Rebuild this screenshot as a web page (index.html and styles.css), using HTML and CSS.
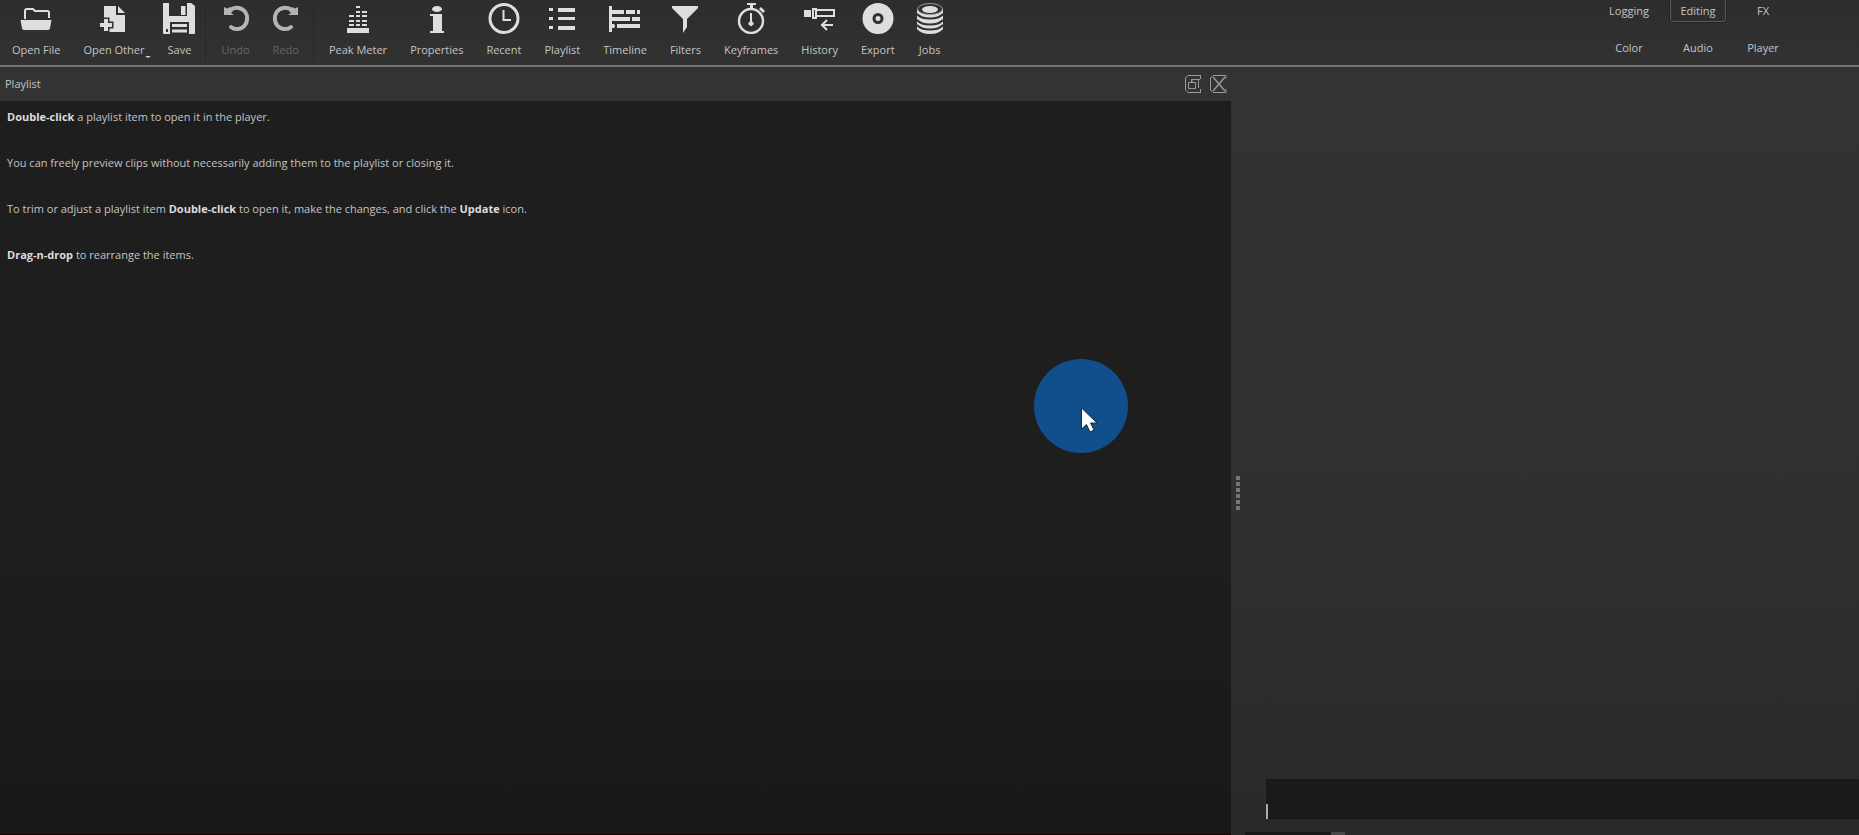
FILE: index.html
```
<!DOCTYPE html>
<html lang="en">
<head>
<meta charset="utf-8">
<title>Video Editor</title>
<link rel="stylesheet" href="styles.css">
</head>
<body>
<div class="app">
  <header class="topbar">
    <div class="toolbar" role="toolbar" aria-label="Main">
      <button class="tool"><svg class="icon" viewBox="0 0 32 32"><path d="M5 17V9q0-2 2-2h6l2 2h12.500q1.500 0 1.500 1.500V16" fill="none" stroke="currentColor" stroke-width="2"/><path d="M.5 18h31l-1.500 8q-.3 2-2 2H4q-1.700 0-2-2z" fill="currentColor"/></svg>Open File</button>
      <button class="tool"><svg class="icon" viewBox="0 0 32 32"><path d="M6 4h12v9h9v17H6z" fill="currentColor"/><path d="M20 4l7 7h-7z" fill="currentColor"/><path d="M6 17h4v4h4v4h-4v4H6v-4H2v-4h4z" fill="currentColor" stroke="#303030" stroke-width="3" paint-order="stroke"/></svg>Open Other<i class="more"></i></button>
      <button class="tool"><svg class="icon" viewBox="0 0 32 32"><path d="M0 1h6v13h18V1h4l4 3v27q0 1-1 1H1q-1 0-1-1z" fill="currentColor"/><path d="M18 4h4.500v9H18z" fill="currentColor"/><path d="M7 20h19v12H7zM3 27h2v3H3z" fill="#303030"/><path d="M9 23.500h15M9 29h15" stroke="currentColor" stroke-width="3"/></svg>Save</button>
      <span class="separator"></span>
      <button class="tool" disabled><svg class="icon" viewBox="0 0 32 32"><path d="M10 8q4-3 9-2c12 3 10 20-1 21q-4 .5-7-2" fill="none" stroke="currentColor" stroke-width="4" stroke-linecap="round"/><path d="M4 5l3 1.500L10 5l3 4-2 2 3 2H4z" fill="currentColor"/></svg>Undo</button>
      <button class="tool" disabled><svg class="icon" viewBox="0 0 32 32"><path d="M22 8q-4-3-9-2c-12 3-10 20 1 21q4 .5 7-2" fill="none" stroke="currentColor" stroke-width="4" stroke-linecap="round"/><path d="M28 5l-3 1.500L22 5l-3 4 2 2-3 2h10z" fill="currentColor"/></svg>Redo</button>
      <span class="separator"></span>
      <button class="tool"><svg class="icon" viewBox="0 0 32 32"><path d="M5 26h22v5H5zM7 22h5v2H7zM14 22h4v2h-4zM20 22h5v2h-5zM7 18h5v2H7zM14 18h4v2h-4zM20 18h5v2h-5zM7 13h5v2H7zM14 13h4v2h-4zM20 13h5v2h-5zM14 9h4v2h-4zM20 9h5v2h-5zM14 4h4v2h-4z" fill="currentColor"/></svg>Peak Meter</button>
      <button class="tool"><svg class="icon" viewBox="0 0 32 32"><g fill="currentColor"><ellipse cx="16" cy="7" rx="5" ry="3"/><path d="M9 12h12v17h2v2H9v-2h3V14H9z"/></g></svg>Properties</button>
      <button class="tool"><svg class="icon" viewBox="0 0 32 32"><circle cx="16" cy="16.500" r="14" fill="none" stroke="currentColor" stroke-width="3"/><path d="M15.500 8v10H23" fill="none" stroke="currentColor" stroke-width="2"/></svg>Recent</button>
      <button class="tool"><svg class="icon" viewBox="0 0 32 32"><path d="M3 6h4v3H3zM12 6h17v4H12zM3 15h4v3H3zM12 15h17v3H12zM3 24h4v3H3zM12 24h17v4H12z" fill="currentColor"/></svg>Playlist</button>
      <button class="tool"><svg class="icon" viewBox="0 0 32 32"><path d="M0 4h3v4h12v4H3v3h18v4H3v3h2q2 2 0 4H3v4H0zM17 8h9v4h-9zM28 8h3v4h-3zM23 15h8v4h-8zM8 22h23v4H8z" fill="currentColor"/></svg>Timeline</button>
      <button class="tool"><svg class="icon" viewBox="0 0 32 32"><path d="M3 4h26v2L18 17v8l-4 6V17L3 6z" fill="currentColor"/></svg>Filters</button>
      <button class="tool"><svg class="icon" viewBox="0 0 32 32"><circle cx="16" cy="19" r="12" fill="none" stroke="currentColor" stroke-width="2.500"/><path d="M12 1h9v2h-3v4h-3V3h-3zM24 7l2-2 4 4-2 2z" fill="currentColor"/><path d="M15 11h2v8l2 3-3 2.500-3-2.500 2-3z" fill="currentColor"/></svg>Keyframes</button>
      <button class="tool"><svg class="icon" viewBox="0 0 32 32"><path d="M0 8h7v7H0zM8 6h5v11H8z" fill="currentColor"/><path d="M10 8h1v7h-1z" fill="#303030"/><path d="M13 8h17v6H13M29 23H17M23 18l-5 5 5 5" fill="none" stroke="currentColor" stroke-width="2"/></svg>History</button>
      <button class="tool"><svg class="icon" viewBox="0 0 32 32"><circle cx="16" cy="16.500" r="15.500" fill="currentColor"/><circle cx="16" cy="16.500" r="4" fill="none" stroke="#303030" stroke-width="3"/></svg>Export</button>
      <button class="tool"><svg class="icon" viewBox="0 0 32 32"><path d="M3 7v20q4 5 13 5t13-5V7z" fill="currentColor"/><ellipse cx="16" cy="7" rx="12.500" ry="5.500" fill="#303030" stroke="#999" stroke-width="1"/><ellipse cx="16" cy="7.500" rx="8" ry="3.500" fill="currentColor"/><path d="M3 12q4 4.500 13 4.500T29 12M3 18q4 4.500 13 4.500T29 18M3 23q4 4.500 13 4.500T29 23" fill="none" stroke="#303030" stroke-width="2"/></svg>Jobs</button>
    </div>
    <nav class="layouts" aria-label="Layouts">
      <button class="layout">Logging</button>
      <button class="layout current" aria-pressed="true">Editing</button>
      <button class="layout">FX</button>
      <button class="layout">Color</button>
      <button class="layout">Audio</button>
      <button class="layout">Player</button>
    </nav>
  </header>
  <main class="workspace">
    <section class="dock">
      <div class="dock-title">
        <h1>Playlist</h1>
        <button class="dock-button" aria-label="Float"><svg viewBox="0 0 18 20"><path d="M4 1.500h13M4 1.500L1.500 4v12L4 18.500h13M16.500 1v4M16.500 15v4M16 5.500H8v3M14.500 6v8M4.500 8.500h7v6h-7zM7.500 8V5" fill="none" stroke="currentColor"/></svg></button>
        <button class="dock-button" aria-label="Close"><svg viewBox="0 0 18 20"><path d="M4 1.500h13v3M4 1.500L1.500 4v12L4 18.500h13V15" fill="none" stroke="currentColor"/><path d="M4 3l12 14M16 3L4 17" fill="none" stroke="currentColor" stroke-width="1.500"/></svg></button>
      </div>
      <div class="playlist">
        <p><b>Double-click</b> a playlist item to open it in the player.</p>
        <p>You can freely preview clips without necessarily adding them to the playlist or closing it.</p>
        <p>To trim or adjust a playlist item <b>Double-click</b> to open it, make the changes, and click the <b>Update</b> icon.</p>
        <p><b>Drag-n-drop</b> to rearrange the items.</p>
        <div class="pointer"><svg viewBox="0 0 18 26"><path d="M1.500 1v21l5-4.500L10 25l4-2-3.500-7H17z" fill="#fff" stroke="#1c2c40"/></svg></div>
      </div>
    </section>
    <div class="splitter"><i></i><i></i><i></i><i></i><i></i><i></i></div>
    <section class="player">
      <div class="scrub"><span class="playhead"></span></div>
      <div class="tabs"></div>
    </section>
  </main>
</div>
</body>
</html>
```
FILE: styles.css
```
* {
  box-sizing: border-box;
}

body {
  margin: 0;
  background: #303030;
  color: #c4c4c4;
  font: 11px/16px "Open Sans", "Noto Sans", sans-serif;
}

button {
  margin: 0;
  padding: 0;
  border: 0;
  background: none;
  color: inherit;
  font: inherit;
}

.app {
  display: flex;
  flex-direction: column;
  height: 100vh;
  overflow: hidden;
}

.topbar {
  display: flex;
  justify-content: space-between;
  border-bottom: 2px solid #757575;
  background: linear-gradient(#2d2d2d, #323232);
}

.toolbar {
  display: flex;
  height: 65px;
}

.tool {
  position: relative;
  display: flex;
  flex-direction: column;
  align-items: center;
  gap: 8px;
  padding: 2px 11px 0 12px;
}

.icon {
  width: 32px;
  height: 32px;
  margin: 0 -4px;
  color: #dedede;
}

.tool:disabled {
  color: #666;
}

.tool:disabled .icon {
  color: #b4b4b4;
}

.more {
  position: absolute;
  right: 4px;
  top: 56px;
  border: 3px solid transparent;
  border-top: 2px solid #ccc;
  border-bottom: 0;
}

.separator {
  width: 1px;
  margin: 4px 3px;
  background: #282828;
}

.layouts {
  display: grid;
  grid-template-columns: 60px 60px 52px;
  gap: 15px 9px;
  justify-items: center;
  align-content: start;
  margin-right: 70px;
}

.layout {
  height: 22px;
  padding: 0 9px;
}

.layout.current {
  border: 1px solid #5a5a5a;
  border-top: 0;
  border-radius: 0 0 3px 3px;
  outline: 1px solid #222;
}

.workspace {
  display: flex;
  flex: 1;
  min-height: 0;
  background: linear-gradient(#333 0%, #303030 60%, #292929 100%);
}

.dock {
  display: flex;
  flex: 0 0 66.22%;
  flex-direction: column;
}

.dock-title {
  display: flex;
  align-items: center;
  gap: 7px;
  height: 34px;
  padding: 0 4px 0 5px;
}

.dock-title h1 {
  flex: 1;
  margin: 0;
  font: inherit;
}

.dock-button {
  width: 18px;
  height: 20px;
  color: #999;
}

.dock-button svg {
  display: block;
}

.playlist {
  position: relative;
  flex: 1;
  padding: 8px 7px;
  border-bottom: 1px solid #120808;
  background: linear-gradient(#1e1e1e 60%, #181818);
}

.playlist p {
  margin: 0 0 30px;
}

.playlist b {
  color: #dcdcdc;
}

.pointer {
  position: absolute;
  left: 1034px;
  top: 258px;
  width: 94px;
  height: 94px;
  padding: 48px 0 0 46px;
  border-radius: 50%;
  background: #114f8c;
}

.pointer svg {
  display: block;
  width: 18px;
  height: 26px;
}

.splitter {
  display: flex;
  flex-direction: column;
  justify-content: center;
  align-items: center;
  gap: 2px;
  width: 14px;
  padding-top: 84px;
}

.splitter i {
  width: 4px;
  height: 4px;
  background: #757575;
}

.player {
  display: flex;
  flex: 1;
  flex-direction: column;
  justify-content: flex-end;
}

.scrub {
  display: flex;
  align-items: flex-end;
  height: 40px;
  margin: 0 0 13px 21px;
  background: #191919;
}

.playhead {
  width: 2px;
  height: 15px;
  background: #aaa;
}

.tabs {
  width: 100px;
  height: 3px;
  border-right: 14px solid #484848;
  background: #181818;
}
```
